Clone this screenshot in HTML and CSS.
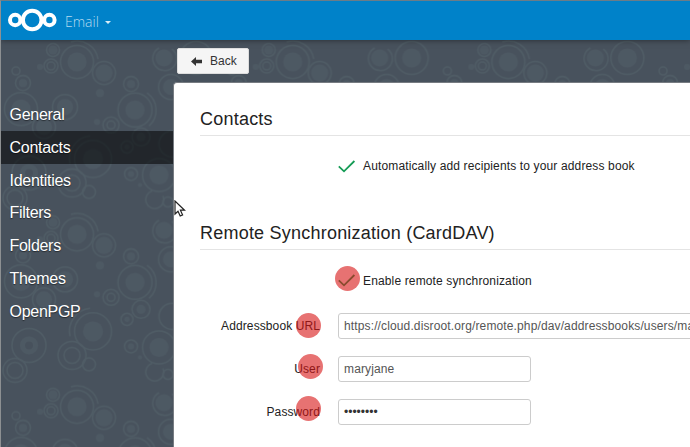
FILE: index.html
```html
<!DOCTYPE html>
<html lang="en">
<head>
<meta charset="utf-8">
<title>Email settings</title>
<link rel="stylesheet" href="styles.css">
</head>
<body>
<svg class="backdrop" width="690" height="447" aria-hidden="true">
  <defs>
    <pattern id="rings" x="0" y="40" width="215.7" height="172.4" patternUnits="userSpaceOnUse">
      <g fill="none" stroke="#4f5c65" stroke-width="1.5">
        <circle cx="77" cy="22" r="16.5"/><path d="M71 2a21 21 0 0 1 27 17"/>
        <circle cx="53" cy="10" r="6.5"/><circle cx="51" cy="26" r="7"/><circle cx="51" cy="26" r="4"/>
        <circle cx="16" cy="31" r="4"/><circle cx="23" cy="43" r="7.5"/>
        <circle cx="104" cy="33" r="11.5"/><circle cx="131" cy="44" r="7.5"/>
        <path d="M172 9a12 12 0 1 1-13-1"/><circle cx="196" cy="18" r="16.5"/>
        <circle cx="171" cy="47" r="12.5"/><circle cx="135" cy="70" r="17"/><path d="M147 53a21 21 0 0 1 2 33"/>
        <circle cx="21" cy="69" r="16.5"/><circle cx="65" cy="67" r="12.5"/>
        <circle cx="111" cy="85" r="8"/><circle cx="111" cy="85" r="4"/><circle cx="44" cy="87" r="11.5"/>
        <circle cx="141" cy="97" r="9"/><circle cx="127" cy="107" r="6"/>
        <circle cx="93" cy="119" r="18.5"/><path d="M70 124a23 23 0 0 1 20-28"/>
        <circle cx="29" cy="133" r="17"/><circle cx="72" cy="143" r="14"/><circle cx="72" cy="143" r="8"/>
        <circle cx="89" cy="152" r="6.5"/><circle cx="131" cy="134" r="6.5"/>
        <circle cx="159" cy="135" r="16.5"/><path d="M163 156a9 9 0 1 1-11-5"/><circle cx="168" cy="162" r="5"/>
        <circle cx="15" cy="158" r="12"/><circle cx="15" cy="158" r="8"/><circle cx="172" cy="104" r="13"/>
      </g>
      <g fill="#4d5963">
        <circle cx="77" cy="22" r="9.5"/><circle cx="53" cy="10" r="4.5"/><circle cx="40" cy="27" r="3"/>
        <circle cx="104" cy="33" r="8.5"/><circle cx="164" cy="18" r="8.5"/><circle cx="196" cy="18" r="9.5"/>
        <circle cx="171" cy="47" r="8"/><circle cx="135" cy="70" r="9.5"/><circle cx="100" cy="53" r="4"/>
        <circle cx="21" cy="69" r="9.5"/><circle cx="65" cy="67" r="8"/><circle cx="44" cy="87" r="8"/>
        <circle cx="93" cy="119" r="10"/><circle cx="159" cy="135" r="9.5"/><circle cx="97" cy="82" r="3"/>
        <circle cx="140" cy="145" r="2"/><circle cx="131" cy="44" r="4"/><circle cx="23" cy="43" r="4"/>
        <circle cx="141" cy="97" r="4.5"/><circle cx="127" cy="107" r="2.5"/><circle cx="29" cy="133" r="9"/>
        <circle cx="131" cy="134" r="3"/>
      </g>
      <circle cx="29" cy="133" r="4" fill="#47515c"/>
    </pattern>
  </defs>
  <rect width="690" height="447" fill="#48525d"/>
  <rect width="690" height="447" fill="url(#rings)"/>
</svg>
<div class="window">
  <header class="topbar">
    <svg class="logo" width="50" height="24" viewBox="0 0 50 24" fill="none" stroke="#fff">
      <circle cx="25.2" cy="12" r="9.3" stroke-width="4"/>
      <circle cx="8.2" cy="12" r="5.2" stroke-width="4"/>
      <circle cx="42.4" cy="12" r="5.2" stroke-width="4"/>
    </svg>
    <span class="app-name">Email</span>
    <span class="caret"></span>
  </header>
  <div class="body">
    <nav class="sidebar">
      <a>General</a>
      <a class="active">Contacts</a>
      <a>Identities</a>
      <a>Filters</a>
      <a>Folders</a>
      <a>Themes</a>
      <a>OpenPGP</a>
    </nav>
    <main class="main">
      <button class="back">
        <svg width="11" height="9" viewBox="0 0 11 9"><path d="M0 4.5 5 0v2.7h6v3.6H5V9z" fill="#333"/></svg>
        <span>Back</span>
      </button>
      <section class="panel">
        <h2>Contacts</h2>
        <div class="row check">
          <svg class="tick" width="18" height="13" viewBox="0 0 18 13"><path d="M.8 6.3 6 11.3 16.4 1" fill="none" stroke="#169c56" stroke-width="1.8"/></svg>
          <span>Automatically add recipients to your address book</span>
        </div>
        <h2 class="remote">Remote Synchronization (CardDAV)</h2>
        <div class="row check">
          <svg class="tick" width="18" height="13" viewBox="0 0 18 13"><path d="M.8 6.3 6 11.3 16.4 1" fill="none" stroke="#169c56" stroke-width="1.8"/></svg>
          <span>Enable remote synchronization</span>
          <i class="dot dot-check"></i>
        </div>
        <div class="row field">
          <label>Addressbook URL</label>
          <div class="input wide">https://cloud.disroot.org/remote.php/dav/addressbooks/users/ma</div>
          <i class="dot dot-url"></i>
        </div>
        <div class="row field">
          <label>User</label>
          <div class="input">maryjane</div>
          <i class="dot dot-user"></i>
        </div>
        <div class="row field">
          <label>Password</label>
          <div class="input secret">••••••••</div>
          <i class="dot dot-password"></i>
        </div>
      </section>
    </main>
  </div>
</div>
<svg class="cursor" width="12" height="18" viewBox="0 0 12 18"><path d="M1 1v13l3-2.8 2.2 4.8 2.4-1-2.2-4.8h4.2z" fill="#fff" stroke="#222" stroke-width="1.2"/></svg>
</body>
</html>
```

FILE: styles.css
```css
* { box-sizing: border-box; }
body {
  margin: 0;
  width: 690px;
  height: 447px;
  overflow: hidden;
  position: relative;
  font-family: "Liberation Sans", Arial, sans-serif;
  font-size: 12px;
  color: #222;
}
.backdrop { position: absolute; left: 0; top: 0; }
.window {
  position: relative;
  height: 447px;
  border-top: 1px solid #6b7c87;
  border-left: 1px solid #8d9092;
  overflow: hidden;
}
.topbar {
  height: 39px;
  display: flex;
  align-items: center;
  padding-left: 6px;
  background: #0082c9;
  box-shadow: 0 0 6px rgba(0, 0, 0, .5);
}
.logo { margin-top: -1px; }
.app-name {
  margin: 2px 0 0 8px;
  width: 34px;
  font: 300 14px "Open Sans", sans-serif;
  color: #b5daef;
}
.caret {
  margin: 4px 0 0 6px;
  border: 3.5px solid transparent;
  border-top-color: #d9edf7;
  border-bottom: 0;
}
.body { display: flex; height: 407px; }
.sidebar { width: 172px; padding-top: 58px; flex: none; }
.sidebar .active { background: rgba(0, 0, 0, .53); }
.sidebar a {
  display: block;
  height: 32.8px;
  padding-left: 8.5px;
  line-height: 33px;
  font-size: 16px;
  letter-spacing: -.28px;
  color: #fff;
  text-shadow: 0 1px 1px rgba(0, 0, 0, .5);
}
.main { flex: 1; min-width: 0; display: flex; flex-direction: column; align-items: flex-start; }
.back {
  display: flex;
  align-items: center;
  gap: 8px;
  width: 72px;
  height: 26px;
  margin: 8px 0 8px 4px;
  padding: 0 0 0 13px;
  border: 1px solid #ddd;
  border-radius: 2px;
  background: #f5f5f5;
  font: 12px "Liberation Sans", sans-serif;
  color: #333;
}
.panel {
  align-self: stretch;
  flex: 1;
  padding: 24px 0 0 26px;
  border: solid #777c82;
  border-width: 1px 0 0 1px;
  border-radius: 4px 0 0 0;
  background: #fff;
  overflow: hidden;
}
h2 {
  margin: 0;
  height: 29px;
  line-height: 24px;
  border-bottom: 1px solid #e4e4e4;
  font-size: 18px;
  font-weight: 400;
  letter-spacing: .22px;
}
h2.remote { margin-top: 42px; }
.row { position: relative; display: flex; align-items: center; white-space: nowrap; }
.check { height: 24px; margin-top: 19px; padding-left: 137.5px; gap: 7.5px; }
.tick { margin-bottom: 1px; }
.check span { position: relative; top: -1px; letter-spacing: .14px; }
.remote + .check span { top: 0; }
.field { height: 26px; margin-top: 17px; gap: 18px; }
.check + .field { margin-top: 20px; }
label { width: 120px; flex: none; text-align: right; letter-spacing: .1px; }
.input {
  width: 193px;
  height: 26px;
  padding-left: 5px;
  line-height: 24px;
  border: 1px solid #ccc;
  border-radius: 3px;
  letter-spacing: .13px;
  color: #555;
  overflow: hidden;
}
.input.wide { width: 380px; flex: none; }
.secret { color: #333; letter-spacing: 0; }
.dot {
  position: absolute;
  width: 25px;
  height: 25px;
  border-radius: 50%;
  background: rgba(215, 20, 20, .6);
}
.dot-check { left: 135px; top: -3px; }
.dot-url { left: 96px; top: 0; }
.dot-user { left: 98px; top: -2px; }
.dot-password { left: 96px; top: -3px; }
.cursor { position: absolute; left: 174px; top: 200px; }
```
